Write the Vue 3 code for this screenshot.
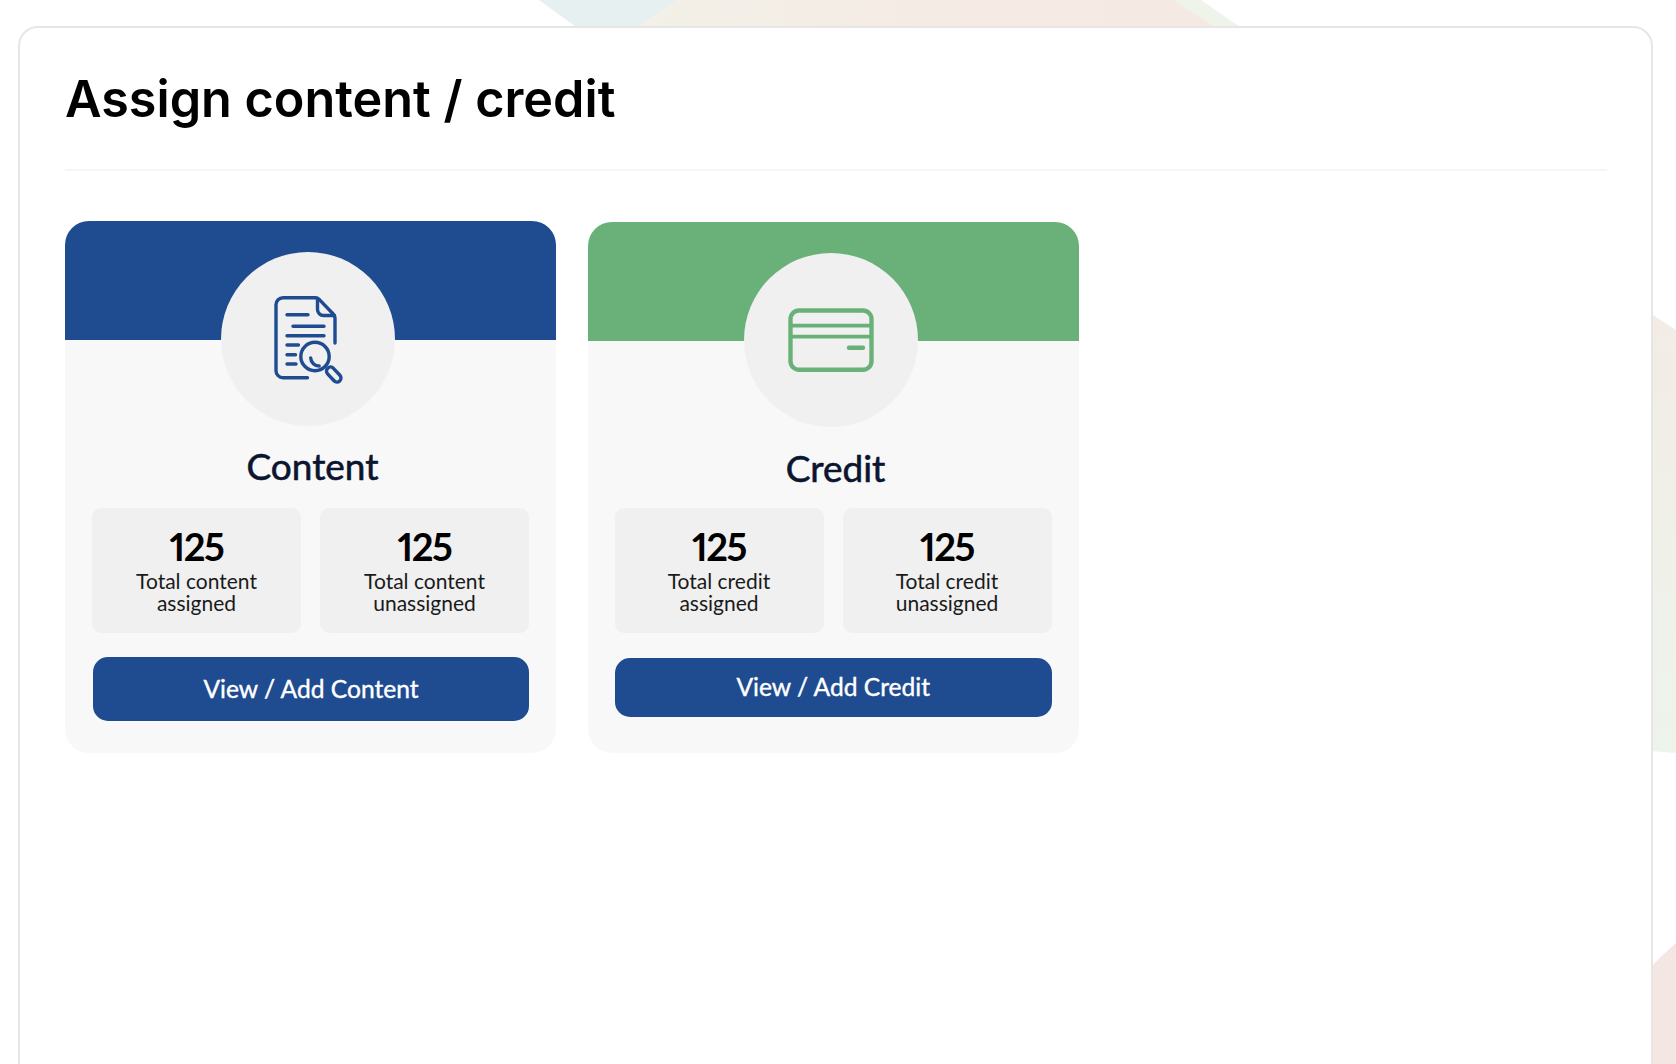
<script setup>
const contentStats = [
  { value: 125, label: 'Total content assigned' },
  { value: 125, label: 'Total content unassigned' },
]
const creditStats = [
  { value: 125, label: 'Total credit assigned' },
  { value: 125, label: 'Total credit unassigned' },
]
</script>

<template>
  <div class="page">
    <svg class="backdrop" width="1676" height="1064" viewBox="0 0 1676 1064" aria-hidden="true">
      <defs>
        <linearGradient id="topBand" x1="0" y1="0" x2="1" y2="0">
          <stop offset="0" stop-color="#f2f0e8" />
          <stop offset="0.6" stop-color="#f5eae4" />
          <stop offset="1" stop-color="#f5e9e4" />
        </linearGradient>
        <linearGradient id="sideBand" x1="0" y1="0" x2="0" y2="1">
          <stop offset="0" stop-color="#f2ece5" />
          <stop offset="1" stop-color="#edf4ec" />
        </linearGradient>
      </defs>
      <polygon points="539,0 576,27 637,27 679,0" fill="#e6f0f0" />
      <polygon points="679,0 637,27 1216,27 1174,0" fill="url(#topBand)" />
      <polygon points="1174,0 1216,27 1240,27 1201,0" fill="#eef4ea" />
      <polygon points="1650,313 1676,330 1676,753 1650,751" fill="url(#sideBand)" />
      <path d="M1650 968 Q1662 955 1676 943 L1676 1064 L1650 1064 Z" fill="#f4e6e2" />
    </svg>

    <main class="panel">
      <header class="panel-head">
        <h1>Assign content / credit</h1>
      </header>

      <section class="cards">
        <article class="card card-content">
          <div class="band band-blue"></div>
          <div class="circle">
            <svg width="100" height="100" viewBox="-2 4 100 100" fill="none" stroke="#1f4b91" stroke-width="3.4" stroke-linecap="round" stroke-linejoin="round">
              <path d="M47.5 92.7H23a7 7 0 0 1-7-7V19.7a7 7 0 0 1 7-7H55.5q2 0 3.4 1.5L73 28.8q2 2 2 4.2V58" />
              <path d="M57.5 13.5V24.5a6 6 0 0 0 6 6H74.5" />
              <path d="M27 29.7H48M33 41.3H64M27 50.7H64M27 60H38.5M27 69.7H35.5M27 79H36" />
              <circle cx="55" cy="71.5" r="14.2" />
              <path d="M50.7 73a8.5 8.5 0 0 0 8.5 8" />
              <rect x="65" y="85.5" width="17.5" height="8" rx="4" transform="rotate(47 73.7 89.5)" />
            </svg>
          </div>
          <h2>Content</h2>
          <div class="stats">
            <div v-for="(stat, i) in contentStats" :key="i" class="stat">
              <strong>{{ stat.value }}</strong>
              <span>{{ stat.label }}</span>
            </div>
          </div>
          <button class="action" type="button">View / Add Content</button>
        </article>

        <article class="card card-credit">
          <div class="band band-green"></div>
          <div class="circle">
            <svg width="100" height="100" viewBox="0 0 100 100" fill="none" stroke="#6ab179" stroke-linecap="round">
              <rect x="9.5" y="20.5" width="81" height="59.3" rx="8.5" stroke-width="4.4" />
              <path d="M9.5 35.7H90.5M9.5 46.7H90.5" stroke-width="3.8" stroke-linecap="butt" />
              <path d="M68 57.7H82" stroke-width="4.4" />
            </svg>
          </div>
          <h2>Credit</h2>
          <div class="stats">
            <div v-for="(stat, i) in creditStats" :key="i" class="stat">
              <strong>{{ stat.value }}</strong>
              <span>{{ stat.label }}</span>
            </div>
          </div>
          <button class="action" type="button">View / Add Credit</button>
        </article>
      </section>
    </main>
  </div>
</template>

<style>
html,
body {
  margin: 0;
  height: 100%;
  overflow: hidden;
  background: #fff;
}
</style>

<style scoped>
.page {
  position: relative;
  width: 1676px;
  height: 1064px;
  overflow: hidden;
  padding: 26px 23px 0 18px;
  box-sizing: border-box;
  font-family: Lato, "Noto Sans", sans-serif;
}
.backdrop {
  position: absolute;
  inset: 0;
}
.panel {
  position: relative;
  height: 1100px;
  box-sizing: border-box;
  background: #fff;
  border: 2px solid #e6e6e6;
  border-radius: 20px;
  padding: 0 44px 0 45px;
}
.panel-head {
  height: 143px;
  border-bottom: 2px solid #f5f5f5;
  display: flex;
  align-items: center;
  box-sizing: border-box;
}
h1 {
  margin: 0;
  font-family: Inter, sans-serif;
  font-size: 50.3px;
  font-weight: 600;
  line-height: 58px;
  color: #000;
}
.cards {
  display: flex;
  gap: 32px;
  margin-top: 50px;
  align-items: flex-end;
}
.card {
  width: 491px;
  display: flex;
  flex-direction: column;
  background: #f8f8f8;
  border-radius: 24px;
  overflow: hidden;
  box-sizing: border-box;
}
.card-content {
  height: 531.5px;
  padding-bottom: 31.5px;
}
.card-credit {
  height: 530.5px;
  padding-bottom: 35.5px;
}
.band {
  height: 119px;
  flex: none;
}
.band-blue {
  background: #1f4b91;
}
.band-green {
  background: #6ab179;
}
.circle {
  position: relative;
  flex: none;
  width: 174px;
  height: 174px;
  margin: -88px 0 0 156px;
  border-radius: 50%;
  background: #f0f0f0;
  display: flex;
  align-items: center;
  justify-content: center;
}
h2 {
  flex: 1;
  margin: 0;
  display: flex;
  align-items: center;
  justify-content: center;
  padding-left: 4px;
  font-size: 37px;
  font-weight: 400;
  -webkit-text-stroke: 0.6px #0b1530;
  color: #0b1530;
}
.card-content h2 {
  padding-bottom: 4px;
}
.stats {
  display: grid;
  grid-template-columns: 209px 209px;
  gap: 19px;
  padding: 0 27px;
}
.card-credit .stats {
  padding: 0 26px 0 26.5px;
}
.stat {
  height: 125px;
  box-sizing: border-box;
  background: #f0f0f0;
  border-radius: 9px;
  padding: 15px 30px 0;
  display: flex;
  flex-direction: column;
  align-items: center;
  text-align: center;
  color: #1a1a1a;
}
.stat strong {
  font-size: 38px;
  font-weight: 700;
  font-variant-numeric: proportional-nums;
  letter-spacing: -1.5px;
  line-height: 47px;
  color: #000;
}
.stat span {
  font-size: 21px;
  line-height: 22.4px;
}
.action {
  display: block;
  border: 0;
  color: #fff;
  background: #1f4b91;
  font: inherit;
  font-weight: 400;
  font-size: 24.6px;
  -webkit-text-stroke: 0.4px #fff;
  padding: 0;
}
.card-content .action {
  height: 64px;
  margin: 24px 27px 0 28px;
  padding-bottom: 2px;
  border-radius: 15px;
}
.card-credit .action {
  height: 59px;
  margin: 25px 27px 0 26.5px;
  padding-bottom: 2px;
  border-radius: 15px;
}
</style>
